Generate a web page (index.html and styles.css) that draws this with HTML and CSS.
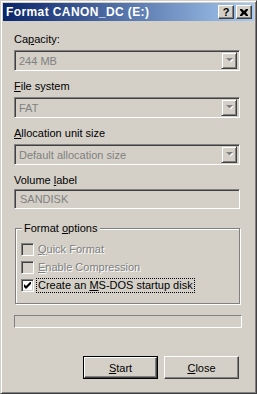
FILE: index.html
```html
<!DOCTYPE html>
<html lang="en">
<head>
    <meta charset="UTF-8">
    <title>Format CANON_DC (E:)</title>
    <link rel="stylesheet" href="styles.css">
</head>
<body>
    <div class="window">
        <div class="titlebar">
            <span class="title">Format CANON_DC (E:)</span>
            <span class="tb-btn help">?</span>
            <span class="tb-btn close">
                <svg width="8" height="7" viewBox="0 0 8 7"><path d="M0 0h2l2 2 2-2h2v1L6 3.5 8 6v1H6L4 5 2 7H0V6l2-2.5L0 1z" fill="#000"/></svg>
            </span>
        </div>

        <div class="content">
            <div class="field-label">Ca<u>p</u>acity:</div>
            <div class="combo">
                <span class="value">244 MB</span>
                <span class="arrow"><svg width="7" height="5" viewBox="0 0 7 5"><path d="M1 1h7L4.5 4.5z" fill="#fff"/><path d="M0 0h7L3.5 3.5z" fill="#808080"/></svg></span>
            </div>

            <div class="field-label gap"><u>F</u>ile system</div>
            <div class="combo">
                <span class="value">FAT</span>
                <span class="arrow"><svg width="7" height="5" viewBox="0 0 7 5"><path d="M1 1h7L4.5 4.5z" fill="#fff"/><path d="M0 0h7L3.5 3.5z" fill="#808080"/></svg></span>
            </div>

            <div class="field-label gap"><u>A</u>llocation unit size</div>
            <div class="combo">
                <span class="value">Default allocation size</span>
                <span class="arrow"><svg width="7" height="5" viewBox="0 0 7 5"><path d="M1 1h7L4.5 4.5z" fill="#fff"/><path d="M0 0h7L3.5 3.5z" fill="#808080"/></svg></span>
            </div>

            <div class="field-label gap">Volume <u>l</u>abel</div>
            <div class="textbox">SANDISK</div>

            <div class="group">
                <span class="legend">Format <u>o</u>ptions</span>
                <div class="check disabled"><span class="box"></span><span class="text"><u>Q</u>uick Format</span></div>
                <div class="check disabled"><span class="box"></span><span class="text"><u>E</u>nable Compression</span></div>
                <div class="check"><span class="box on"><svg width="7" height="7" viewBox="0 0 7 7"><path d="M0 2v3l2 2 5-5V-1L2 4z" fill="#000"/></svg></span><span class="text focus">Create an <u>M</u>S-DOS startup disk</span></div>
            </div>

            <div class="progress"></div>

            <div class="buttons">
                <span class="btn default"><span><u>S</u>tart</span></span>
                <span class="btn"><span><u>C</u>lose</span></span>
            </div>
        </div>
    </div>
</body>
</html>
```

FILE: styles.css
```css
body { margin: 0; font-family: "Liberation Sans", Arial, sans-serif; font-size: 11px; color: #000; }
u { text-decoration: underline; text-underline-offset: 1px; }

.window {
    width: 257px; height: 394px; box-sizing: border-box;
    background: #d4d0c8;
    border: 1px solid; border-color: #d4d0c8 #404040 #404040 #d4d0c8;
    box-shadow: inset 1px 1px #fff, inset -1px -1px #808080;
    padding: 2px;
}

.titlebar {
    height: 18px; display: flex; align-items: center;
    background: linear-gradient(to right, #0a246a, #a6caf0);
    padding: 0 2px 0 3px;
}
.title { flex: 1; color: #fff; font-weight: bold; font-size: 12px; letter-spacing: 0.4px; }
.tb-btn {
    width: 16px; height: 14px; box-sizing: border-box;
    display: flex; align-items: center; justify-content: center;
    background: #d4d0c8;
    border: 1px solid; border-color: #fff #404040 #404040 #fff;
    box-shadow: inset -1px -1px #808080;
    font-weight: bold; font-size: 11px; line-height: 1;
}
.tb-btn.help { margin-right: 2px; padding-top: 1px; }

.content { padding: 12px 14px 0 11px; }
.field-label { height: 13px; line-height: 13px; }
.field-label.gap { margin-top: 9px; }

.combo, .textbox {
    margin-top: 4px; height: 21px; box-sizing: border-box;
    border: 1px solid; border-color: #808080 #fff #fff #808080;
    box-shadow: inset 1px 1px #404040, inset -1px -1px #d4d0c8;
    display: flex; align-items: center; padding: 2px;
    color: #808080;
}
.combo .value { flex: 1; padding-left: 2px; }
.combo .arrow {
    width: 16px; height: 17px; box-sizing: border-box;
    border: 1px solid; border-color: #d4d0c8 #404040 #404040 #d4d0c8;
    box-shadow: inset 1px 1px #fff, inset -1px -1px #808080;
    display: flex; align-items: center; justify-content: center;
}
.textbox { margin-top: 2px; height: 20px; padding-left: 5px; }

.group {
    position: relative; margin: 19px 0 0 1px;
    height: 76px; box-sizing: border-box;
    border: 1px solid #808080;
    box-shadow: 1px 1px #fff, inset 1px 1px #fff;
    padding: 14px 0 0 5px;
    display: flex; flex-direction: column; gap: 5px;
}
.group .legend {
    position: absolute; left: 6px; top: -7px;
    background: #d4d0c8; padding: 0 3px 0 2px; line-height: 13px;
}
.check { display: flex; align-items: center; height: 13px; }
.check .box {
    width: 13px; height: 13px; box-sizing: border-box;
    border: 1px solid; border-color: #808080 #fff #fff #808080;
    box-shadow: inset 1px 1px #404040, inset -1px -1px #d4d0c8;
    background: #d4d0c8;
    display: flex; align-items: center; justify-content: center;
}
.check .box.on { background: #fff; }
.check .text { margin-left: 2px; padding: 0 1px; line-height: 13px; border: 1px solid transparent; }
.check .text.focus { border: 1px dotted #000; }
.check.disabled .text { color: #808080; text-shadow: 1px 1px #fff; }

.progress {
    margin: 11px -2px 0 0; height: 13px; box-sizing: border-box;
    border: 1px solid; border-color: #808080 #fff #fff #808080;
}

.buttons { display: flex; justify-content: flex-end; gap: 6px; margin-top: 28px; margin-right: 1px; }
.btn {
    width: 75px; height: 23px; box-sizing: border-box;
    border: 1px solid; border-color: #fff #404040 #404040 #fff;
    box-shadow: inset -1px -1px #808080;
    display: flex; align-items: center; justify-content: center;
}
.btn.default { border: 1px solid #000; }
.btn.default > span {
    flex: 1; align-self: stretch; display: flex; align-items: center; justify-content: center;
    border: 1px solid; border-color: #fff #404040 #404040 #fff;
    box-shadow: inset -1px -1px #808080;
}
```
